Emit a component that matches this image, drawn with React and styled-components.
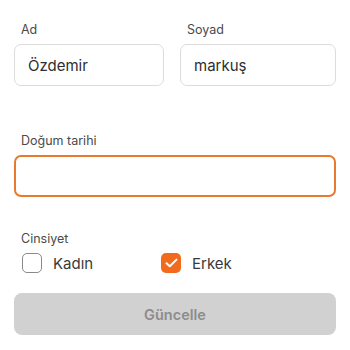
import React from "react";
import styled, { createGlobalStyle } from "styled-components";

const Global = createGlobalStyle`
  html, body { margin: 0; padding: 0; background: #ffffff; }
  body { font-family: Inter, "Noto Sans", sans-serif; -webkit-font-smoothing: antialiased; }
`;

const Page = styled.div`
  width: 350px;
  height: 350px;
  box-sizing: border-box;
  padding: 22px 14px 0 14px;
  display: flex;
  flex-direction: column;
`;

const Row = styled.div`
  display: grid;
  grid-template-columns: 150px 156px;
  column-gap: 16px;
`;

const Field = styled.div`
  display: flex;
  flex-direction: column;
`;

const Label = styled.label`
  font-size: 12.5px;
  color: #4a4a4a;
  line-height: 16px;
  padding-left: 7px;
  margin-bottom: 6px;
`;

const Input = styled.div`
  height: 42px;
  box-sizing: border-box;
  border: ${(p) => (p.$focused ? "2px solid #e9792c" : "1.5px solid #dcdcdc")};
  border-radius: 7px;
  display: flex;
  align-items: center;
  padding-left: 13px;
  font-size: 15px;
  color: #2e2e2e;
  background: #fff;
`;

const Section = styled.div`
  margin-top: ${(p) => p.$mt}px;
`;

const RadioRow = styled.div`
  display: grid;
  grid-template-columns: 139px 1fr;
  padding-left: 8px;
`;

const Option = styled.div`
  display: flex;
  align-items: center;
  gap: 11px;
  font-size: 15px;
  color: #3a3a3a;
`;

const Box = styled.div`
  width: 20px;
  height: 20px;
  box-sizing: border-box;
  border-radius: 5px;
  border: ${(p) => (p.$checked ? "none" : "1.5px solid #8a8a8a")};
  background: ${(p) => (p.$checked ? "#f26a1c" : "#fff")};
  display: flex;
  align-items: center;
  justify-content: center;
`;

const Button = styled.button`
  margin-top: 20px;
  height: 42px;
  width: 100%;
  border: none;
  border-radius: 8px;
  background: #d1d1d1;
  color: #8c8c8c;
  font-family: Inter, "Noto Sans", sans-serif;
  font-size: 14.5px;
  font-weight: 600;
`;

export default function App() {
  return (
    <>
      <Global />
      <Page>
        <Row>
          <Field>
            <Label>Ad</Label>
            <Input>Özdemir</Input>
          </Field>
          <Field>
            <Label>Soyad</Label>
            <Input>markuş</Input>
          </Field>
        </Row>
        <Section $mt={47}>
          <Field>
            <Label>Doğum tarihi</Label>
            <Input $focused />
          </Field>
        </Section>
        <Section $mt={34}>
          <Label as="div">Cinsiyet</Label>
          <RadioRow>
            <Option>
              <Box />
              Kadın
            </Option>
            <Option>
              <Box $checked>
                <svg width="13" height="10" viewBox="0 0 13 10" fill="none">
                  <path d="M1.5 5.2L4.8 8.3L11.5 1.6" stroke="#fff" strokeWidth="2" strokeLinecap="round" strokeLinejoin="round" />
                </svg>
              </Box>
              Erkek
            </Option>
          </RadioRow>
        </Section>
        <Button>Güncelle</Button>
      </Page>
    </>
  );
}
